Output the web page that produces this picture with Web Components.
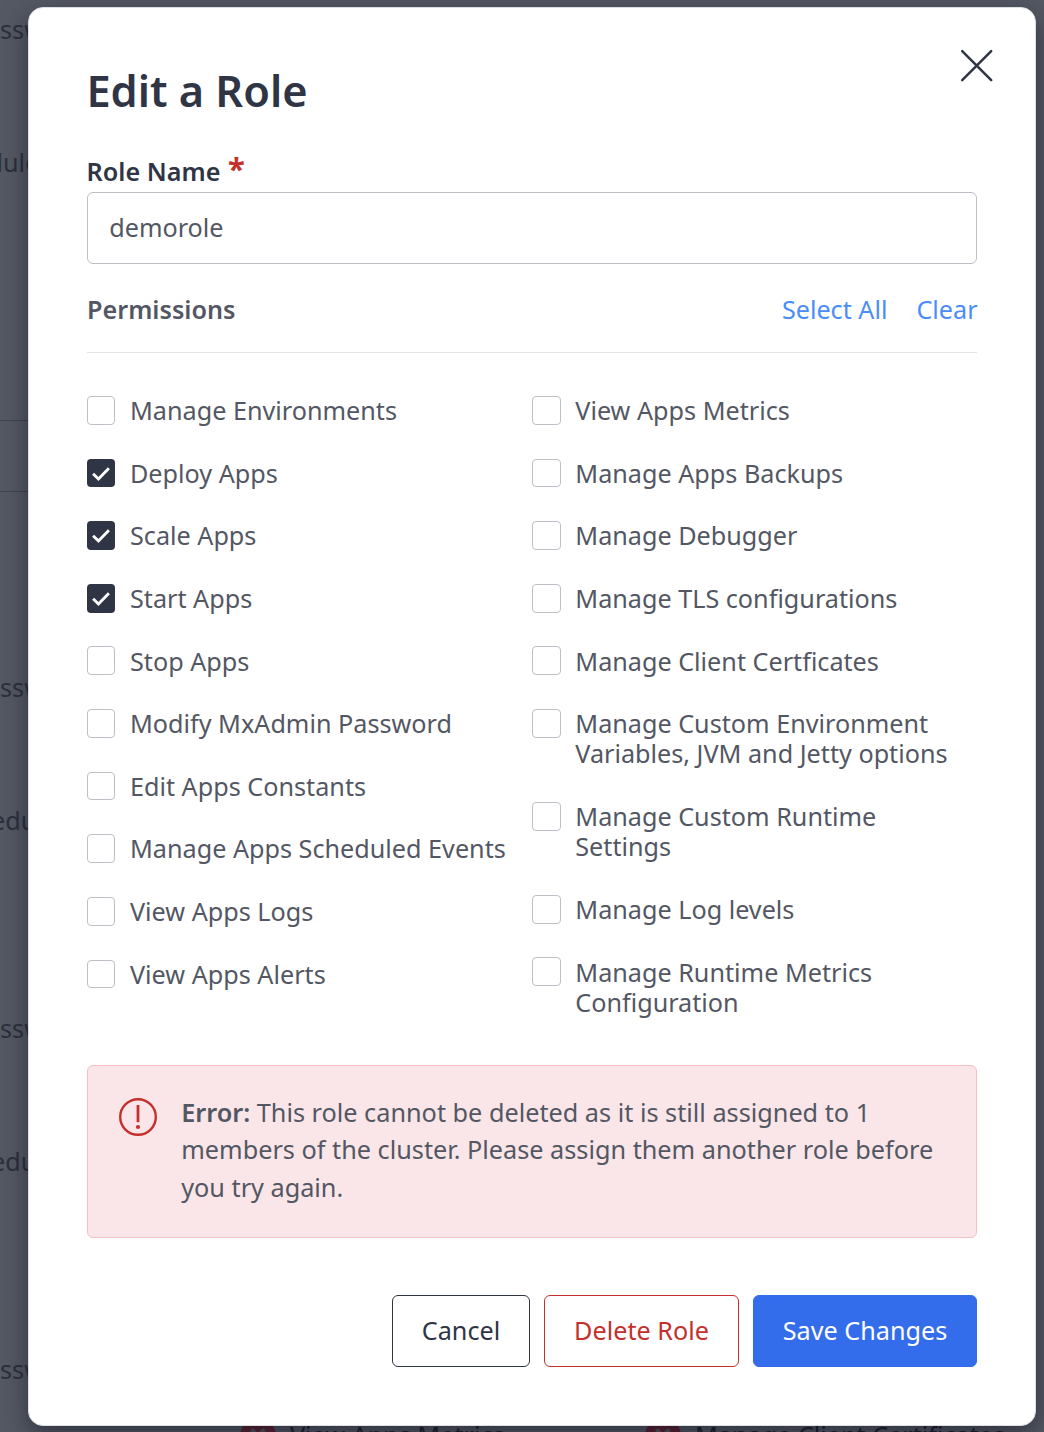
<!DOCTYPE html>
<html lang="en">
<head>
<meta charset="utf-8">
<title>Edit a Role</title>
<style>
  html, body { margin: 0; height: 100%; overflow: hidden; }
  body { background: #555963; font: 400 25.2px/30.24px "Noto Sans", sans-serif; color: #535763; }
</style>
</head>
<body>
<role-page></role-page>
<script>
const define = (name, html) => customElements.define(name, class extends HTMLElement {
  connectedCallback() {
    if (this.shadowRoot) return;
    const root = this.attachShadow({ mode: 'open' });
    const t = document.createElement('template');
    t.innerHTML = html;
    root.append(t.content.cloneNode(true));
  }
});

define('close-icon', `
  <style>:host{display:block;width:34px;height:34px} svg{display:block}</style>
  <svg width="34" height="34" viewBox="0 0 34 34" fill="none" stroke="#2f3545" stroke-width="2.5" stroke-linecap="round"><path d="M2.2 2.2 31.2 31.2M31.2 2.2 2.2 31.2"/></svg>`);

define('alert-icon', `
  <style>:host{display:block;flex:none;width:38px;height:38px} svg{display:block}</style>
  <svg width="38" height="38" viewBox="0 0 38 38" fill="none"><circle cx="19" cy="19" r="17.8" stroke="#c4302b" stroke-width="2.4"/><path d="M19 7v17.2" stroke="#c4302b" stroke-width="2.8"/><circle cx="19" cy="29" r="2.1" fill="#c4302b"/></svg>`);

define('denied-icon', `
  <style>:host{display:block;flex:none;width:36px;height:36px} svg{display:block}</style>
  <svg width="36" height="36" viewBox="0 0 36 36"><circle cx="18" cy="18" r="18" fill="#5c2230"/><path d="M11.500 11.500 24.500 24.500M24.500 11.500 11.500 24.500" stroke="#55525c" stroke-width="4"/></svg>`);

define('page-behind', `
  <style>
    :host{display:flex;flex-direction:column;width:1044px;height:1432px;overflow:hidden;color:#2c303e}
    .t{flex:none;height:34px;line-height:34px;width:60px;white-space:nowrap}
    .r{flex:none;height:1px;width:500px;background:#41444f}
    .row{display:flex;flex:none;height:34px;line-height:34px;margin-top:32px;padding-left:240px;color:#1d202c}
    .cell{display:flex;width:405px;flex:none;gap:14px;white-space:nowrap}
  </style>
  <div class="t" style="margin-top:12px">ssw</div>
  <div class="t" style="margin-top:99px;text-indent:-12.600px">dule</div>
  <div class="r" style="margin-top:241px"></div>
  <div class="r" style="margin-top:70px"></div>
  <div class="t" style="margin-top:178px">ssw</div>
  <div class="t" style="margin-top:99px;text-indent:-9px">edu</div>
  <div class="t" style="margin-top:174px">ssw</div>
  <div class="t" style="margin-top:99px;text-indent:-9px">edu</div>
  <div class="t" style="margin-top:174px">ssw</div>
  <div class="row">
    <div class="cell"><denied-icon></denied-icon>View Apps Metrics</div>
    <div class="cell"><denied-icon></denied-icon>Manage Client Certificates</div>
  </div>`);

define('text-field', `
  <style>
    :host{display:block;margin-top:32px}
    label{display:flex;gap:7.500px;height:39px;line-height:36px;font-weight:600;color:#2f3545;margin-left:-.4px}
    i{font:700 31px/36px "Noto Sans",sans-serif;color:#c4302b;margin-top:-3px}
    .box{box-sizing:border-box;height:72px;border:1px solid #bfc0c7;border-radius:6px;padding:0 21.200px;line-height:69px}
  </style>
  <label><slot name="label"></slot><i>*</i></label>
  <div class="box"><slot></slot></div>`);

define('section-head', `
  <style>
    :host{display:flex;box-sizing:border-box;height:63px;margin-top:26px;line-height:39px;border-bottom:1px solid #e5e5e7}
    b{flex:1;font-weight:600}
    .links{display:flex;gap:29px;color:#4a8df8;margin-right:-.6px}
  </style>
  <b><slot></slot></b><div class="links"><span>Select All</span><span>Clear</span></div>`);

define('check-item', `
  <style>
    :host{display:flex;gap:14.600px}
    .box{box-sizing:border-box;flex:none;width:28.400px;height:28.800px;margin-top:.8px;border:1px solid #bfc0c7;border-radius:4px}
    svg{display:none}
    :host([checked]) .box{border:0;background:#2f3545}
    :host([checked]) svg{display:block;width:28.400px;height:28.800px}
  </style>
  <div class="box"><svg viewBox="0 0 28.8 28.8" fill="none" stroke="#fff" stroke-width="2.9"><path d="M6.200 14.800 11.600 20 22.200 9.200"/></svg></div>
  <div><slot></slot></div>`);

define('check-list', `
  <style>:host{display:flex;flex-direction:column;gap:32.400px}</style><slot></slot>`);

define('error-note', `
  <style>
    :host{display:flex;box-sizing:border-box;height:173px;margin-top:46px;padding:28px 31px;gap:24.200px;border:1px solid #f5c0c3;border-radius:6px;background:#fae6e8;font-size:25.250px;line-height:37.500px}
    alert-icon{margin-top:4px}
    b{font-weight:600}
    p{margin:0;white-space:nowrap}
  </style>
  <alert-icon></alert-icon>
  <p><b>Error:</b> This role cannot be deleted as it is still assigned to 1<br>members of the cluster. Please assign them another role before<br>you try again.</p>`);

define('action-button', `
  <style>
    :host{display:block;box-sizing:border-box;height:72px;line-height:69px;border:1px solid #2f3545;border-radius:6px;color:#2f3545;text-align:center;white-space:nowrap}
    :host([kind=danger]){border-color:#c4302b;color:#c4302b}
    :host([kind=primary]){border-color:#336dec;background:#336dec;color:#fff}
  </style><slot></slot>`);

define('role-dialog', `
  <style>
    :host{display:block;box-sizing:border-box;width:1008px;height:1419px;padding:0 58px;border:1px solid #dcdee2;border-radius:15px;background:#fff;box-shadow:0 9px 27px rgba(10,14,30,.5)}
    header{display:flex;justify-content:space-between;padding-top:41px}
    h1{margin:12px 0 0 -.6px;font-size:43.300px;font-weight:600;line-height:60px;color:#2f3545}
    close-icon{margin-right:-17px}
    .cols{display:grid;grid-template-columns:445.300px 444.700px;margin-top:42.100px;height:623.900px}
    .cols check-list{white-space:nowrap}
    footer{display:flex;justify-content:flex-end;gap:14px;margin-top:57px}
  </style>
  <header><h1>Edit a Role</h1><close-icon></close-icon></header>
  <text-field><span slot="label">Role Name</span>demorole</text-field>
  <section-head>Permissions</section-head>
  <div class="cols">
    <check-list>
      <check-item>Manage Environments</check-item>
      <check-item checked>Deploy Apps</check-item>
      <check-item checked>Scale Apps</check-item>
      <check-item checked>Start Apps</check-item>
      <check-item>Stop Apps</check-item>
      <check-item>Modify MxAdmin Password</check-item>
      <check-item>Edit Apps Constants</check-item>
      <check-item>Manage Apps Scheduled Events</check-item>
      <check-item>View Apps Logs</check-item>
      <check-item>View Apps Alerts</check-item>
    </check-list>
    <check-list>
      <check-item>View Apps Metrics</check-item>
      <check-item>Manage Apps Backups</check-item>
      <check-item>Manage Debugger</check-item>
      <check-item>Manage TLS configurations</check-item>
      <check-item>Manage Client Certficates</check-item>
      <check-item>Manage Custom Environment<br>Variables, JVM and Jetty options</check-item>
      <check-item>Manage Custom Runtime<br>Settings</check-item>
      <check-item>Manage Log levels</check-item>
      <check-item>Manage Runtime Metrics<br>Configuration</check-item>
    </check-list>
  </div>
  <error-note></error-note>
  <footer>
    <action-button style="width:138px">Cancel</action-button>
    <action-button kind="danger" style="width:195px">Delete Role</action-button>
    <action-button kind="primary" style="width:224px">Save Changes</action-button>
  </footer>`);

define('role-page', `
  <style>
    :host{display:grid;width:1044px;height:1432px;overflow:hidden}
    page-behind,role-dialog{grid-area:1/1}
    role-dialog{margin:7px 0 0 28px}
  </style>
  <page-behind></page-behind><role-dialog></role-dialog>`);
</script>
</body>
</html>
